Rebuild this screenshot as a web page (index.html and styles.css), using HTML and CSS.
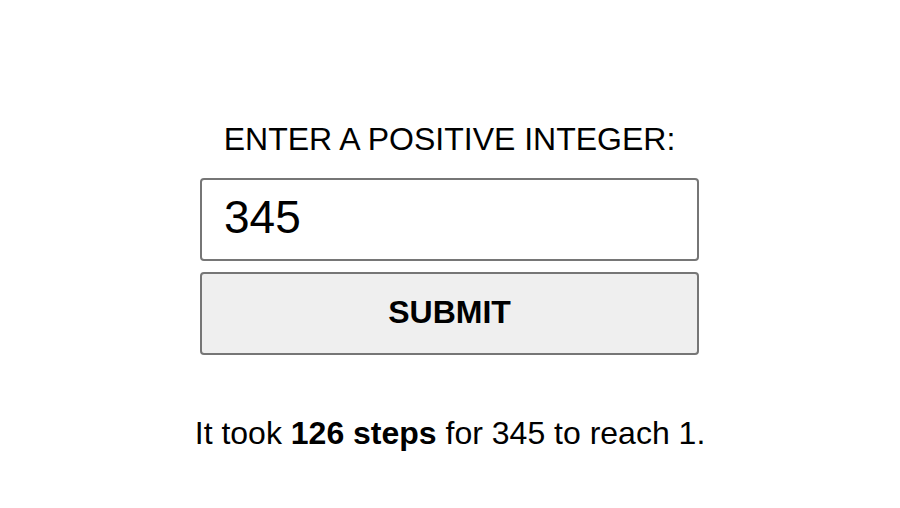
FILE: index.html
```html
<!DOCTYPE html>
<html lang="en">
<head>
<meta charset="utf-8">
<title>Collatz</title>
<link rel="stylesheet" href="styles.css">
</head>
<body>
<main class="app">
  <form class="form">
    <label class="label" for="num">ENTER A POSITIVE INTEGER:</label>
    <input class="input" id="num" type="text" value="345">
    <button class="button" type="button">SUBMIT</button>
  </form>
  <p class="result">It took <strong>126 steps</strong> for 345 to reach 1.</p>
</main>
</body>
</html>
```
FILE: styles.css
```css
html, body {
  margin: 0;
  padding: 0;
  background: #fff;
}
body {
  font-family: "Liberation Sans", Arial, sans-serif;
  color: #000;
}
.app {
  display: flex;
  flex-direction: column;
  align-items: center;
  padding-top: 121px;
}
.form {
  display: flex;
  flex-direction: column;
  align-items: center;
  width: 499px;
  margin-right: 1px;
}
.label {
  font-size: 32px;
  line-height: 37px;
  margin-bottom: 20px;
}
.input {
  box-sizing: border-box;
  width: 499px;
  height: 83px;
  border: 2px solid #767676;
  border-radius: 4px;
  padding: 0 22px 5px;
  font-family: "Liberation Sans", Arial, sans-serif;
  font-size: 46px;
  color: #000;
  background: #fff;
  outline: none;
}
.button {
  box-sizing: border-box;
  width: 499px;
  height: 83px;
  margin-top: 11px;
  padding: 0 0 2px;
  border: 2px solid #767676;
  border-radius: 4px;
  background: #efefef;
  font-family: "Liberation Sans", Arial, sans-serif;
  font-size: 32px;
  font-weight: bold;
  color: #000;
}
.result {
  margin: 60px 0 0;
  font-size: 32px;
  line-height: 37px;
}
```
